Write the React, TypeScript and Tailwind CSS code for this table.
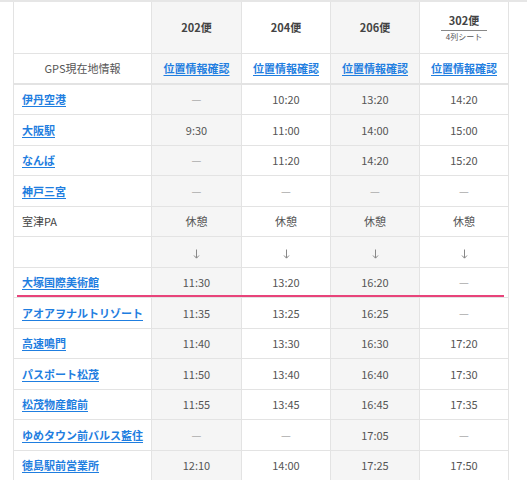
import React from 'react';

type Stop = { name: string; link: boolean; times: string[] };

const DASH = '—';
const ARROW = 'arrow';

const stops: Stop[] = [
  { name: '伊丹空港', link: true, times: [DASH, '10:20', '13:20', '14:20'] },
  { name: '大阪駅', link: true, times: ['9:30', '11:00', '14:00', '15:00'] },
  { name: 'なんば', link: true, times: [DASH, '11:20', '14:20', '15:20'] },
  { name: '神戸三宮', link: true, times: [DASH, DASH, DASH, DASH] },
  { name: '室津PA', link: false, times: ['休憩', '休憩', '休憩', '休憩'] },
  { name: '', link: false, times: [ARROW, ARROW, ARROW, ARROW] },
  { name: '大塚国際美術館', link: true, times: ['11:30', '13:20', '16:20', DASH] },
  { name: 'アオアヲナルトリゾート', link: true, times: ['11:35', '13:25', '16:25', DASH] },
  { name: '高速鳴門', link: true, times: ['11:40', '13:30', '16:30', '17:20'] },
  { name: 'パスポート松茂', link: true, times: ['11:50', '13:40', '16:40', '17:30'] },
  { name: '松茂物産館前', link: true, times: ['11:55', '13:45', '16:45', '17:35'] },
  { name: 'ゆめタウン前バルス藍住', link: true, times: [DASH, DASH, '17:05', DASH] },
  { name: '徳島駅前営業所', link: true, times: ['12:10', '14:00', '17:25', '17:50'] },
];

const shade = (i: number) => (i === 0 || i === 2 ? 'bg-[#f5f5f5]' : 'bg-white');

const linkCls = 'text-[#1f7ee0] font-bold underline underline-offset-2 decoration-1';

function Arrow() {
  return (
    <svg width="7" height="10" viewBox="0 0 7 10" className="inline-block align-middle">
      <path d="M3.5 0.5V9M1 6.5l2.5 2.7L6 6.5" fill="none" stroke="#888" strokeWidth="1" />
    </svg>
  );
}

export default function App() {
  return (
    <div
      className="relative w-[527px] h-[480px] overflow-hidden bg-white border-t-2 border-[#e6e6e6] pl-[13px]"
      style={{ fontFamily: '"Noto Sans CJK JP", "Noto Sans", sans-serif' }}
    >
      <table className="table-fixed border-collapse w-[495px] text-[11px] text-[#555]">
        <colgroup>
          <col className="w-[138px]" />
          <col className="w-[90px]" />
          <col className="w-[89px]" />
          <col className="w-[89px]" />
          <col className="w-[89px]" />
        </colgroup>
        <thead>
          <tr className="h-[51px]">
            <th className="border border-t-0 border-[#e3e3e3] bg-white"></th>
            {['202便', '204便', '206便'].map((b, i) => (
              <th key={b} className={`border border-t-0 border-[#e3e3e3] ${shade(i)} font-bold text-[#444] text-[11px]`}>
                {b}
              </th>
            ))}
            <th className="border border-t-0 border-[#e3e3e3] bg-white font-bold text-[#444]">
              <div className="flex flex-col items-center">
                <span className="text-[11px] leading-[16px]">302便</span>
                <span className="mt-[2px] border-t border-[#888] px-[5px] text-[8px] leading-[12px] font-normal text-[#555]">4列シート</span>
              </div>
            </th>
          </tr>
          <tr className="h-[31px] border-b-2 border-[#e3e3e3]">
            <td className="border border-[#e3e3e3] text-center text-[#555]">GPS現在地情報</td>
            {[0, 1, 2, 3].map(i => (
              <td key={i} className={`border border-[#e3e3e3] text-center ${shade(i)}`}>
                <span className={linkCls}>位置情報確認</span>
              </td>
            ))}
          </tr>
        </thead>
        <tbody>
          {stops.map((s, r) => (
            <tr key={r} className="h-[30.5px]">
              <td className="border border-[#e3e3e3] pl-[8px] whitespace-nowrap">
                {s.link ? <span className={linkCls}>{s.name}</span> : <span className="text-[#444]">{s.name}</span>}
              </td>
              {s.times.map((t, i) => (
                <td
                  key={i}
                  className={`border border-[#e3e3e3] text-center ${shade(i)} ${t === DASH ? 'text-[#aaa]' : ''}`}
                >
                  {t === ARROW ? <Arrow /> : t}
                </td>
              ))}
            </tr>
          ))}
        </tbody>
      </table>
      {/* 区切り線 */}
      <div className="absolute left-[17px] top-[293px] w-[487px] h-[2px] bg-[#e8437a]" />
    </div>
  );
}
